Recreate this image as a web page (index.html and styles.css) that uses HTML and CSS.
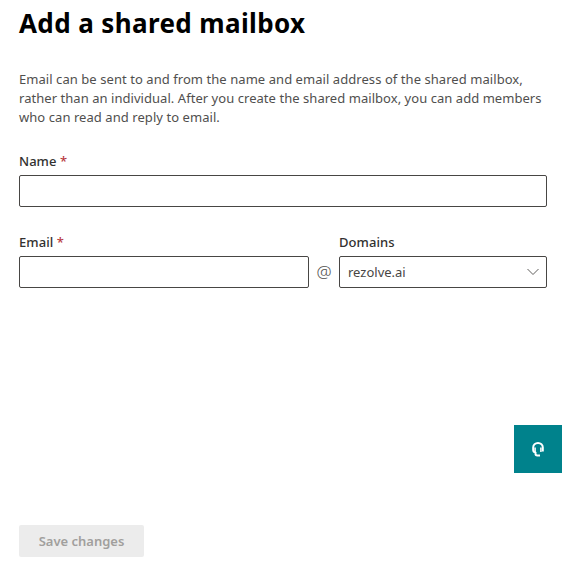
FILE: index.html
```html
<!DOCTYPE html>
<html lang="en">
<head>
<meta charset="utf-8">
<title>Add a shared mailbox</title>
<link rel="stylesheet" href="styles.css">
</head>
<body>
<main class="panel">
  <h1 class="title">Add a shared mailbox</h1>
  <p class="intro"><span class="line">Email can be sent to and from the name and email address of the shared mailbox,</span><span class="line line-tight">rather than an individual. After you create the shared mailbox, you can add members</span><span class="line">who can read and reply to email.</span></p>
  <form class="form">
    <div class="field">
      <label class="label" for="name">Name <span class="required">*</span></label>
      <input class="input" id="name" type="text">
    </div>
    <div class="address">
      <div class="field">
        <label class="label" for="email">Email <span class="required">*</span></label>
        <input class="input" id="email" type="text">
      </div>
      <span class="at">@</span>
      <div class="field">
        <span class="label domains">Domains</span>
        <div class="input select"><span class="value">rezolve.ai</span>
          <svg class="chevron" viewBox="0 0 12 8"><path d="M.5 1 6 6.500 11.500 1"/></svg>
        </div>
      </div>
    </div>
  </form>
  <button class="save" type="button" disabled>Save changes</button>
</main>
<button class="help" type="button" aria-label="Help">
  <svg viewBox="0 0 12 15"><path d="M10.800 9.500V5.500a4.800 4.500 0 0 0-9.600 0V8q0 2 2.300 2.700V12q0 1.400 1.800 1.400H8"/><path class="cups" d="M3.100 5.500v5M8.900 5.500v4.500"/></svg>
</button>
</body>
</html>
```
FILE: styles.css
```css
* { box-sizing: border-box; }
body {
  margin: 0;
  background: #fff;
  color: #323130;
  font-family: "Noto Sans", sans-serif;
  font-size: 13px;
}
.panel {
  display: flex;
  flex-direction: column;
  height: 562px;
  padding: 5px 24px 5px 19px;
}
.title {
  margin: 0;
  color: #000;
  font-size: 26px;
  font-weight: 700;
  letter-spacing: .38px;
  line-height: 36px;
}
.intro {
  margin: 29px 0 0;
  line-height: 19px;
  letter-spacing: .06px;
  color: #504f4e;
}
.line { display: block; white-space: nowrap; }
.line-tight { letter-spacing: .045px; }
.form { margin-top: 24px; }
.field { display: flex; flex-direction: column; }
.label {
  height: 24px;
  line-height: 20px;
  font-weight: 500;
  letter-spacing: .05px;
}
.required { color: #b83a3f; }
.input {
  width: 100%;
  height: 32px;
  border: 1px solid #484644;
  border-radius: 2px;
  background: #fff;
}
.address {
  display: grid;
  grid-template-columns: 290px 30px 208px;
  margin-top: 25px;
}
.at {
  align-self: end;
  line-height: 32px;
  text-align: center;
  font-size: 17px;
  font-weight: 300;
  color: #504f4e;
}
.select {
  display: flex;
  align-items: center;
  justify-content: space-between;
  padding: 0 7px 0 8px;
}
.value { color: #484644; }
.chevron { width: 12px; height: 8px; fill: none; stroke: #605e5c; }
.save {
  width: 125px;
  height: 32px;
  margin-top: auto;
  padding: 0;
  border: 0;
  border-radius: 2px;
  background: #ececec;
  color: #a19f9d;
  font: 600 13px "Noto Sans", sans-serif;
}
.help {
  position: fixed;
  top: 425px;
  left: 514px;
  display: flex;
  align-items: center;
  justify-content: center;
  width: 48px;
  height: 48px;
  padding: 0;
  border: 0;
  background: #00828c;
}
.help svg { width: 12px; height: 15px; fill: none; stroke: #fff; stroke-width: 2; }
.help .cups { stroke-width: 1.5; }
```
